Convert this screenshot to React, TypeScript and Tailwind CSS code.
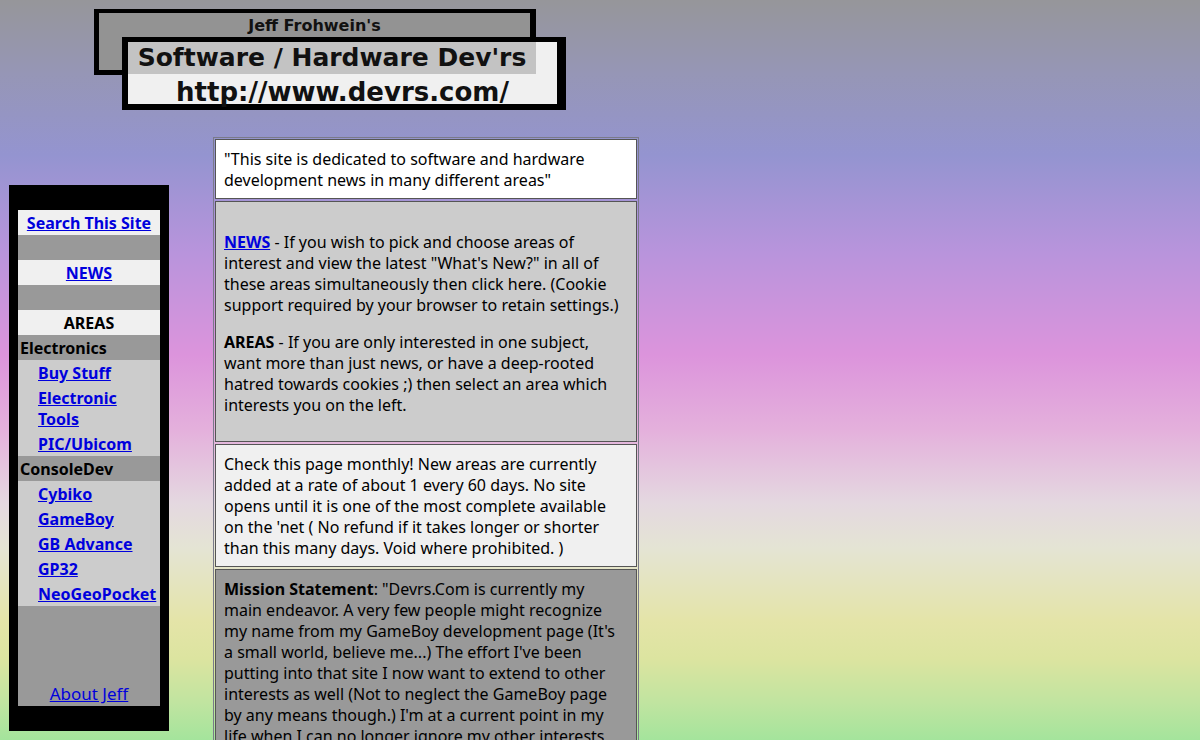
import React from "react";

const body = { fontFamily: '"Noto Sans", "Open Sans", sans-serif' };
const head = { fontFamily: '"DejaVu Sans", Verdana, sans-serif' };

type Item = { label: string[]; href?: string };

const electronics: Item[] = [
  { label: ["Buy Stuff"] },
  { label: ["Electronic", "Tools"] },
  { label: ["PIC/Ubicom"] },
];

const consoleDev: Item[] = [
  { label: ["Cybiko"] },
  { label: ["GameBoy"] },
  { label: ["GB Advance"] },
  { label: ["GP32"] },
  { label: ["NeoGeoPocket"] },
];

function Lines({ lines }: { lines: React.ReactNode[] }) {
  return (
    <>
      {lines.map((l, i) => (
        <span key={i} className="block whitespace-nowrap">
          {l}
        </span>
      ))}
    </>
  );
}

function Header() {
  return (
    <div className="pl-[94px] pt-[9px]" style={head}>
      <div className="w-[442px] h-[66px] border-black border-t-[4px] border-l-[5px] border-r-[6px] border-b-[5px] bg-[#939393]">
        <div className="text-center text-[16px] leading-[24px] font-bold text-[#111] pt-[1px]">
          Jeff Frohwein's
        </div>
      </div>
      <div className="relative ml-[28px] -mt-[38px] w-[444px] border-black border-t-[5px] border-l-[6px] border-r-[9px] border-b-[6px] bg-[#f0f0f0]">
        <div className="flex h-[32px]">
          <div className="w-[408px] bg-[#c3c3c3] flex items-center justify-center">
            <span className="text-[25px] font-bold text-[#111] whitespace-nowrap">
              Software / Hardware Dev'rs
            </span>
          </div>
          <div className="flex-1" />
        </div>
        <div className="h-[30px] flex items-center justify-center pt-[6px]">
          <span className="text-[26px] font-bold text-[#111] whitespace-nowrap">
            http://www.devrs.com/
          </span>
        </div>
      </div>
    </div>
  );
}

function Group({ title, items }: { title: string; items: Item[] }) {
  return (
    <>
      <div className="h-[25px] pt-[1px] leading-[24px] bg-[#999999] px-[2px] font-bold text-black">
        {title}
      </div>
      <div className="bg-[#cccccc]">
        {items.map((it) => (
          <div key={it.label.join(" ")} className="pt-[3px] pb-[1px] pl-[20px] leading-[21px]">
            <a href="#" className="font-bold underline text-[#0000dd] whitespace-nowrap">
              {it.label.map((l, i) => (
                <span key={i} className="block w-fit">
                  {l}
                </span>
              ))}
            </a>
          </div>
        ))}
      </div>
    </>
  );
}

function Sidebar() {
  return (
    <div className="ml-[9px] mt-[48px] w-[160px] bg-black px-[9px] pt-[25px] pb-[25px] text-[16px]" style={body}>
      <div className="flex flex-col">
        <div className="h-[25px] pt-[1px] leading-[24px] bg-[#f0f0f0] text-center">
          <a href="#" className="font-bold underline text-[#0000dd] whitespace-nowrap">
            Search This Site
          </a>
        </div>
        <div className="h-[25px] bg-[#999999]" />
        <div className="h-[25px] pt-[1px] leading-[24px] bg-[#f0f0f0] text-center">
          <a href="#" className="font-bold underline text-[#0000dd]">
            NEWS
          </a>
        </div>
        <div className="h-[25px] bg-[#999999]" />
        <div className="h-[25px] pt-[1px] leading-[24px] bg-[#f0f0f0] text-center font-bold text-black">
          AREAS
        </div>
        <Group title="Electronics" items={electronics} />
        <Group title="ConsoleDev" items={consoleDev} />
        <div className="h-[100px] bg-[#999999] flex flex-col justify-end items-center pb-[2px]">
          <a href="#" className="underline text-[#0000dd] text-[17px] leading-[21px]">
            About Jeff
          </a>
        </div>
      </div>
    </div>
  );
}

function Cell({ bg, className = "", children }: { bg: string; className?: string; children: React.ReactNode }) {
  return (
    <div className={`border border-[#555555] px-[8px] pt-[9px] pb-[7px] ${bg} ${className}`}>{children}</div>
  );
}

function Main() {
  return (
    <div
      className="ml-[44px] w-[426px] border border-[#7a7a8a] p-[1px] flex flex-col gap-[2px] text-[16px] leading-[21px] text-black"
      style={body}
    >
      <Cell bg="bg-white">
        <Lines
          lines={[
            '"This site is dedicated to software and hardware',
            'development news in many different areas"',
          ]}
        />
      </Cell>
      <Cell bg="bg-[#cccccc]" className="pb-[9px]">
        <br />
        <p>
          <Lines
            lines={[
              <>
                <a href="#" className="font-bold underline text-[#0000dd]">
                  NEWS
                </a>{" "}
                - If you wish to pick and choose areas of
              </>,
              'interest and view the latest "What\'s New?" in all of',
              "these areas simultaneously then click here. (Cookie",
              "support required by your browser to retain settings.)",
            ]}
          />
        </p>
        <p className="my-[16px]">
          <Lines
            lines={[
              <>
                <b>AREAS</b> - If you are only interested in one subject,
              </>,
              "want more than just news, or have a deep-rooted",
              "hatred towards cookies ;) then select an area which",
              "interests you on the left.",
            ]}
          />
        </p>
      </Cell>
      <Cell bg="bg-[#f0f0f0]">
        <Lines
          lines={[
            "Check this page monthly! New areas are currently",
            "added at a rate of about 1 every 60 days. No site",
            "opens until it is one of the most complete available",
            "on the 'net ( No refund if it takes longer or shorter",
            "than this many days. Void where prohibited. )",
          ]}
        />
      </Cell>
      <Cell bg="bg-[#999999]" className="pb-[60px]">
        <Lines
          lines={[
            <>
              <b>Mission Statement</b>: "Devrs.Com is currently my
            </>,
            "main endeavor. A very few people might recognize",
            "my name from my GameBoy development page (It's",
            "a small world, believe me...) The effort I've been",
            "putting into that site I now want to extend to other",
            "interests as well (Not to neglect the GameBoy page",
            "by any means though.) I'm at a current point in my",
            "life when I can no longer ignore my other interests",
          ]}
        />
      </Cell>
    </div>
  );
}

export default function App() {
  return (
    <div className="min-h-screen bg-[#a4e49c] bg-no-repeat bg-size-[100%_740px] bg-[linear-gradient(to_bottom,#96969a_0%,#9696b6_10%,#9494d0_21%,#b894dc_34%,#dc94dc_48%,#e4b0dc_58%,#e4d8e0_68%,#e4e4d4_74%,#e4e4a8_84%,#dce4a0_89%,#c0e4a0_95%,#a4e49c_100%)] pb-[40px]">
      <Header />
      <div className="flex items-start mt-[27px]">
        <Sidebar />
        <Main />
      </div>
    </div>
  );
}
